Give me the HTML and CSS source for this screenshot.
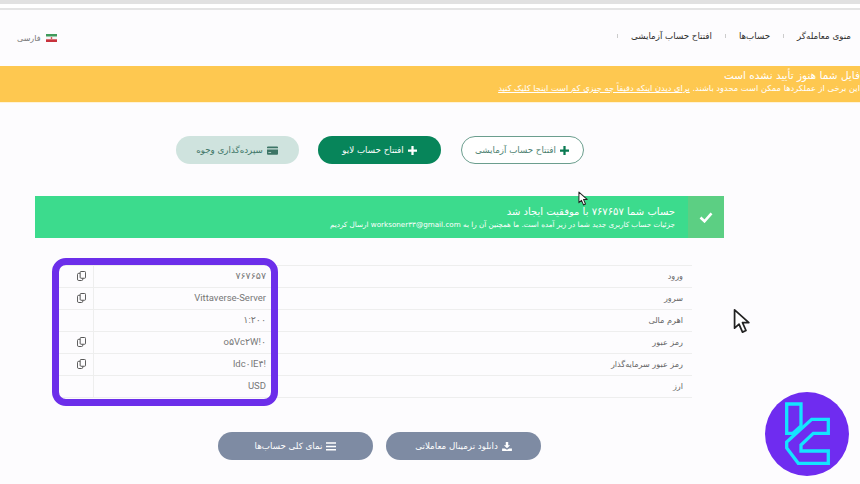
FILE: index.html
```html
<!DOCTYPE html>
<html lang="fa" dir="rtl">
<head>
  <meta charset="UTF-8">
  <meta name="viewport" content="width=device-width, initial-scale=1.0">
  <title>افتتاح حساب آزمایشی</title>
  <link rel="stylesheet" href="styles.css">
</head>
<body>

<div class="topbar"></div>

<!-- هدر -->
<header class="header">
  <nav class="crumbs">
    <a href="#">منوی معامله‌گر</a><i></i>
    <a href="#">حساب‌ها</a><i></i>
    <a href="#">افتتاح حساب آزمایشی</a><i></i>
  </nav>
  <div class="lang">
    <svg class="flag" viewBox="0 0 11 8"><rect width="11" height="2.700" fill="#3f9a5b"/><rect y="2.700" width="11" height="2.600" fill="#f4f4f4"/><rect y="5.300" width="11" height="2.700" fill="#c8323c"/><rect x="4.800" y="3.200" width="1.400" height="1.600" fill="#c8323c"/></svg>
    <span>فارسی</span>
  </div>
</header>

<!-- هشدار پروفایل -->
<section class="notice">
  <h3>فایل شما هنوز تأیید نشده است</h3>
  <p>این برخی از عملکردها ممکن است محدود باشند. <a href="#">برای دیدن اینکه دقیقاً چه چیزی کم است اینجا کلیک کنید</a></p>
</section>

<main class="content">
  <div class="actions">
    <a class="btn btn-outline" href="#"><svg class="ico" viewBox="0 0 12 12"><path d="M4.500 0h3v4.500h4.500v3h-4.500v4.500h-3v-4.500h-4.500v-3h4.500z"/></svg>افتتاح حساب آزمایشی</a>
    <a class="btn btn-live" href="#"><svg class="ico" viewBox="0 0 12 12"><path d="M4.500 0h3v4.500h4.500v3h-4.500v4.500h-3v-4.500h-4.500v-3h4.500z"/></svg>افتتاح حساب لایو</a>
    <a class="btn btn-deposit" href="#"><svg class="ico ico-wide" viewBox="0 0 12 9"><path d="M1 0h10a1 1 0 0 1 1 1v1H0V1a1 1 0 0 1 1-1zM0 3.500h12V8a1 1 0 0 1-1 1H1a1 1 0 0 1-1-1zM1.500 6v1h3V6z" fill-rule="evenodd"/></svg>سپرده‌گذاری وجوه</a>
  </div>

  <div class="alert">
    <div class="alert-check"><svg viewBox="0 0 14 11"><path d="M1.500 5.500l4 3.800 7-8" fill="none" stroke="#fff" stroke-width="2.600"/></svg></div>
    <div class="alert-text">
      <h4>حساب شما ۷۶۷۶۵۷ با موفقیت ایجاد شد</h4>
      <p>جزئیات حساب کاربری جدید شما در زیر آمده است. ما همچنین آن را به worksoner۳۳@gmail.com ارسال کردیم</p>
    </div>
  </div>

  <div class="details">
    <table class="info">
      <tr><td class="k">ورود</td><td class="v">۷۶۷۶۵۷</td><td class="c"><svg class="copy" viewBox="0 0 10 11"><use href="#copy"/></svg></td></tr>
      <tr><td class="k">سرور</td><td class="v">Vittaverse-Server</td><td class="c"><svg class="copy" viewBox="0 0 10 11"><use href="#copy"/></svg></td></tr>
      <tr><td class="k">اهرم مالی</td><td class="v">۱:۲۰۰</td><td class="c"></td></tr>
      <tr><td class="k">رمز عبور</td><td class="v" dir="ltr">o۵Vc۲W!۰</td><td class="c"><svg class="copy" viewBox="0 0 10 11"><use href="#copy"/></svg></td></tr>
      <tr><td class="k">رمز عبور سرمایه‌گذار</td><td class="v" dir="ltr">ldc۰lE۴!</td><td class="c"><svg class="copy" viewBox="0 0 10 11"><use href="#copy"/></svg></td></tr>
      <tr><td class="k">ارز</td><td class="v">USD</td><td class="c"></td></tr>
    </table>
    <div class="highlight"></div>
  </div>

  <div class="actions actions-bottom">
    <a class="btn btn-grey" href="#"><svg class="ico" viewBox="0 0 12 11"><path d="M4.500 0h3v4h2.300L6 7.600 2.200 4h2.300zM0 8h3.500L6 9.500 8.500 8H12v3H0z"/></svg>دانلود ترمینال معاملاتی</a>
    <a class="btn btn-grey" href="#"><svg class="ico" viewBox="0 0 12 10"><path d="M0 0h12v1.800H0zM0 4h12v1.800H0zM0 8h12v1.800H0z"/></svg>نمای کلی حساب‌ها</a>
  </div>
</main>

<!-- نشانگرهای موس و لوگو -->
<svg class="cursor cursor-small" viewBox="0 0 12 16"><use href="#arrow"/></svg>
<svg class="cursor cursor-big" viewBox="0 0 12 16"><use href="#arrow"/></svg>

<svg class="logo" viewBox="0 0 84 84">
  <circle cx="42" cy="42" r="42" fill="#6f2cf0"/>
  <g fill="none" stroke="#14e4ff" stroke-width="3.300">
    <path d="M21.700 12H36V34L28 41.300H21.700z"/>
    <path d="M63.300 27.300H46.700L21.700 50V56L33.300 71.300H63.300V59H36V53L48.300 41.300H63.300z"/>
  </g>
</svg>

<svg class="defs" width="0" height="0">
  <defs>
    <g id="copy" fill="none" stroke="#555" stroke-width="1.100">
      <rect x="3.500" y="0.500" width="6" height="7.500" rx="1"/>
      <path d="M3.500 2.500H2A1.500 1.500 0 0 0 .5 4v5A1.500 1.500 0 0 0 2 10.500h3A1.500 1.500 0 0 0 6.500 9V8" />
    </g>
    <path id="arrow" d="M1 1V12.500L3.800 10L6 15L8.200 14L6 9H10z" fill="#fff" stroke="#222" stroke-width="1.100" stroke-linejoin="round"/>
  </defs>
</svg>

</body>
</html>
```

FILE: styles.css
```css
/* Общий стиль */
body {
  font-family: 'DejaVu Sans', sans-serif;
  margin: 0;
  padding: 0;
  width: 860px;
  height: 484px;
  overflow: hidden;
  position: relative;
  background-color: #fdfcfe;
  color: #555;
}

a {
  color: inherit;
  text-decoration: none;
}

h3, h4, p {
  margin: 0;
  font-weight: normal;
}

.topbar {
  height: 4px;
  background-color: #e1e1e1;
  border-bottom: 2px solid #fff;
  margin-bottom: 4px;
  box-shadow: 0 2px 0 #fff, 0 4px 0 #e4e4e4;
}

/* Header */
.header {
  height: 56px;
  padding: 0 9px 0 17px;
  display: flex;
  justify-content: space-between;
  align-items: center;
}

.crumbs {
  display: flex;
  align-items: center;
  gap: 13px;
  font-size: 8.700px;
  color: #2d2d2d;
  margin-top: -4px;
}

.crumbs i {
  width: 1px;
  height: 4px;
  background-color: #ccc;
}

.lang {
  display: flex;
  align-items: center;
  gap: 5px;
  font-size: 8px;
  color: #777;
}

.flag {
  width: 11px;
  height: 8px;
}

/* Notice */
.notice {
  height: 37px;
  background-color: #fec850;
  color: #fff;
  overflow: hidden;
  border-bottom: 1px solid #fff3d8;
  box-sizing: border-box;
  padding-top: 2px;
}

.notice h3 {
  font-size: 10.500px;
  line-height: 15px;
}

.notice p {
  font-size: 8.300px;
  line-height: 11px;
}

.notice a {
  text-decoration: underline;
}

/* Content */
.content {
  width: 689px;
  margin-right: 136px;
}

.actions {
  display: flex;
  justify-content: center;
  gap: 19.500px;
  padding-top: 33px;
}

.actions-bottom {
  gap: 13px;
  padding-top: 34px;
}

.btn {
  width: 123px;
  height: 28px;
  box-sizing: border-box;
  border-radius: 14px;
  display: flex;
  align-items: center;
  justify-content: center;
  gap: 4px;
  font-size: 8.700px;
}

.ico {
  width: 9px;
  height: 9px;
  fill: currentColor;
  flex: none;
}

.ico-wide {
  width: 11px;
}

.btn-outline {
  border: 1px solid #6b9e8e;
  color: #4c7f70;
  background-color: #fff;
}

.btn-outline .ico {
  fill: #0a7a52;
}

.btn-live {
  background-color: #07855a;
  color: #fff;
}

.btn-deposit {
  background-color: #cfe3de;
  color: #3d7566;
}

.btn-grey {
  width: 155px;
  background-color: #7e8ba3;
  color: #fff;
}

.btn-grey .ico {
  width: 10px;
  height: 9px;
}

/* Alert */
.alert {
  margin-top: 32px;
  height: 42px;
  background-color: #3cdb8d;
  color: #fff;
  display: flex;
  align-items: center;
}

.alert-check {
  width: 36px;
  height: 100%;
  background-color: #5ccf83;
  display: flex;
  align-items: center;
  justify-content: center;
  flex: none;
}

.alert-check svg {
  width: 14px;
  height: 11px;
}

.alert-text {
  padding-right: 13px;
}

.alert-text h4 {
  font-size: 10px;
  line-height: 14px;
}

.alert-text p {
  font-size: 7.200px;
  line-height: 11px;
}

/* Details table */
.details {
  position: relative;
  margin: 27px 32px 0 23px;
}

.info {
  width: 634px;
  border-collapse: collapse;
  table-layout: fixed;
  font-size: 8.100px;
  color: #666;
  border-top: 1px solid #eee;
}

.info tr {
  height: 22px;
}

.info td {
  height: 21px;
  padding: 0 0 2px;
  box-sizing: border-box;
  border-bottom: 1px solid #eee;
}

.info .k {
  width: 413px;
  padding-right: 9px;
}

.info .v {
  padding-right: 13px;
  text-align: right;
  font-family: Roboto, 'DejaVu Sans', sans-serif;
  font-size: 9.500px;
  color: #777;
}

.info .c {
  width: 35px;
  border-right: 1px solid #eee;
  padding-left: 12px;
}

.copy {
  width: 9px;
  height: 10px;
  display: block;
  margin: 0 auto;
}

.highlight {
  position: absolute;
  left: -6px;
  top: -7px;
  width: 226px;
  height: 148px;
  box-sizing: border-box;
  border: 7px solid #6c2eea;
  border-radius: 14px;
}

/* Overlay */
.cursor {
  position: absolute;
}

.cursor-small {
  left: 578px;
  top: 191px;
  width: 11px;
  height: 15px;
}

.cursor-big {
  left: 733px;
  top: 308px;
  width: 19px;
  height: 26px;
}

.logo {
  position: absolute;
  left: 765px;
  top: 392px;
  width: 84px;
  height: 84px;
}

.defs {
  position: absolute;
}
```
